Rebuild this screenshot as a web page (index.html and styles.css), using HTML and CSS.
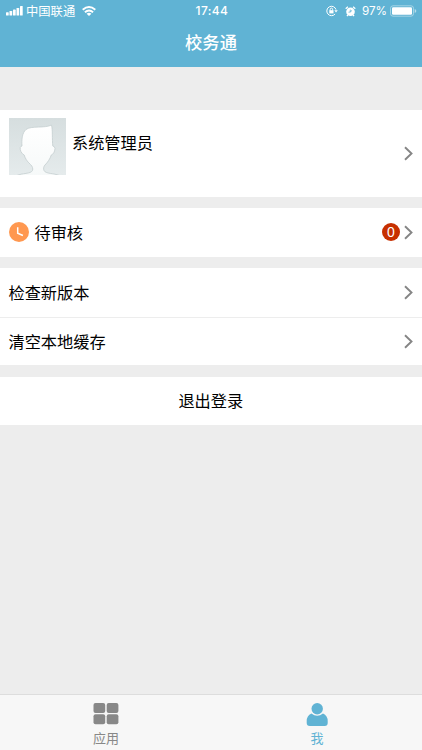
FILE: index.html
```html
<!DOCTYPE html>
<html lang="zh-CN">
<head>
<meta charset="utf-8">
<title>校务通</title>
<link rel="stylesheet" href="styles.css">
</head>
<body>
<header class="header">
  <div class="status">
    <div class="status-left">
      <svg class="signal" width="17" height="10" viewBox="0 0 17 10" fill="#fff"><rect x="0" y="6.2" width="2.7" height="3.4" rx=".6"/><rect x="3.5" y="5" width="2.7" height="4.6" rx=".6"/><rect x="7" y="3.6" width="2.7" height="6" rx=".6"/><rect x="10.5" y="2" width="2.7" height="7.6" rx=".6"/><rect x="14" y="0" width="2.7" height="9.6" rx=".6"/></svg>
      <span class="carrier">中国联通</span>
      <svg class="wifi" width="14" height="10" viewBox="0 0 14 10" fill="none" stroke="#fff" stroke-width="1.9"><path d="M.7 3.7Q7-1.7 13.3 3.7M2.9 6.2Q7 2.6 11.1 6.2"/><path d="M4.6 7.7Q7 5.7 9.4 7.7L7 10Z" fill="#fff" stroke="none"/></svg>
    </div>
    <span class="time">17:44</span>
    <div class="status-right">
      <svg width="12" height="12" viewBox="0 0 12 12" fill="none" stroke="#fff" stroke-width="1"><path d="M9.1 9A4.7 4.7 0 1 1 10 4.6"/><path d="M8.300 5.200h3.500L10 7.600Z" fill="#fff" stroke="none"/><rect x="3.300" y="5.200" width="4.200" height="3.200" fill="#fff" stroke="none"/><path d="M4.200 5.500V4.400q0-1.300 1.200-1.300t1.200 1.300v1.100"/></svg>
      <svg class="alarm" width="11" height="11" viewBox="0 0 11 11" fill="none" stroke="#fff"><circle cx="5.500" cy="5.700" r="4.300" fill="#fff" stroke="none"/><path d="M.7 2.700L2.900.8M10.300 2.700L8.100.8M2.900 8.900L2 10.200M8.100 8.900l.9 1.300" stroke-width="1.300"/><path d="M5.300 3.600V6l-1.800.2M5.300 6l1.800-1.700" stroke="#60b3d4" stroke-width=".8"/></svg>
      <span class="percent">97%</span>
      <svg width="27" height="12" viewBox="0 0 27 12"><rect x=".5" y=".8" width="23" height="10.400" rx="2.500" fill="none" stroke="#b5dcea" stroke-width=".8"/><rect x="2" y="2.200" width="20" height="7.600" rx="1.200" fill="#fff"/><path d="M24.700 4q1.600.4 1.600 2t-1.600 2Z" fill="#b5dcea"/></svg>
    </div>
  </div>
  <h1 class="title">校务通</h1>
</header>
<main class="content">
  <section class="card profile">
    <svg class="avatar" width="57" height="57" viewBox="0 0 57 57">
      <defs>
        <linearGradient id="bg" x2="0" y2="1"><stop stop-color="#d6dedf"/><stop offset="1" stop-color="#e5ebec"/></linearGradient>
        <linearGradient id="face" x2="0" y2="1"><stop stop-color="#fff"/><stop offset="1" stop-color="#f6f9f9"/></linearGradient>
      </defs>
      <path fill="url(#bg)" d="M0 0h57v57H0z"/>
      <path d="M8 57.500C13 55 22 56 23.500 52.500C24.200 50.500 23.500 48.500 21.500 46.500C18 43.500 16 40 15.200 37C12.500 36 10.800 32 11.200 29.500Q11.500 28.300 13 28C12.500 22 13 15 17 11.500C22 7.500 36 10.500 42.500 7C43.800 12 43 21 43.800 28Q46 28.500 46 30.500C45.800 34 44 36.500 42.300 37C41 41 38.500 44.500 36 47C34.500 48.500 34.300 51 35 52.500C36.500 56 45 55 50 57.500Z" fill="url(#face)" stroke="#c4cecf" stroke-width=".8"/>
    </svg>
    <span class="name">系统管理员</span>
    <svg class="chevron" width="9" height="15" viewBox="0 0 9 15"><path d="M1 1.300L7.500 7.500L1 13.700"/></svg>
  </section>
  <section class="card">
    <div class="row">
      <svg class="clock" width="20" height="20" viewBox="0 0 20 20"><circle cx="10" cy="10" r="10" fill="#ff9850"/><path d="M8.700 5.200V11.200l5.200 2.300" fill="none" stroke="#fff" stroke-width="1.500"/></svg>
      <span class="label">待审核</span>
      <span class="badge">0</span>
      <svg class="chevron" width="9" height="15" viewBox="0 0 9 15"><path d="M1 1.300L7.500 7.500L1 13.700"/></svg>
    </div>
  </section>
  <section class="card">
    <div class="row">
      <span class="label">检查新版本</span>
      <svg class="chevron" width="9" height="15" viewBox="0 0 9 15"><path d="M1 1.300L7.500 7.500L1 13.700"/></svg>
    </div>
    <div class="row divided">
      <span class="label">清空本地缓存</span>
      <svg class="chevron" width="9" height="15" viewBox="0 0 9 15"><path d="M1 1.300L7.500 7.500L1 13.700"/></svg>
    </div>
  </section>
  <section class="card">
    <div class="row logout"><span class="label">退出登录</span></div>
  </section>
</main>
<nav class="tabs">
  <div class="tab">
    <svg width="26" height="24" viewBox="0 0 26 24" fill="#888"><rect x=".5" y="0" width="11.700" height="10" rx="2"/><rect x="13.700" y="0" width="11.700" height="10" rx="2"/><rect x=".5" y="11.300" width="11.700" height="10" rx="2"/><rect x="13.700" y="11.300" width="11.700" height="10" rx="2"/></svg>
    <span>应用</span>
  </div>
  <div class="tab active">
    <svg width="26" height="24" viewBox="0 0 26 24" fill="#60b3d4"><circle cx="13.200" cy="5.800" r="5.700"/><path d="M7.400 10.400Q13.200 15.200 19 10.400Q23.700 12.400 23.700 18v2q0 3-3 3H5.700q-3 0-3-3V18q0-5.600 4.700-7.600Z"/></svg>
    <span>我</span>
  </div>
</nav>
</body>
</html>
```
FILE: styles.css
```css
* { box-sizing: border-box; }
body {
  margin: 0;
  height: 750px;
  display: flex;
  flex-direction: column;
  overflow: hidden;
  background: #ededed;
  color: #000;
  font-family: "Liberation Sans", "Noto Sans CJK SC", sans-serif;
  font-size: 16.2px;
}
svg { display: block; flex: none; }
.header { height: 66.5px; background: #60b3d4; color: #fff; }
.status {
  height: 22px;
  padding: 0 5px 0 6px;
  display: grid;
  grid-template-columns: 1fr auto 1fr;
  align-items: center;
  font-family: Inter, "Noto Sans CJK SC", sans-serif;
  font-size: 11.5px;
  line-height: 22px;
}
.status-left, .status-right { display: flex; align-items: center; }
.status-right { justify-content: flex-end; }
.carrier { margin-left: 3px; padding-top: 1px; font-size: 12.3px; line-height: 21px; }
.wifi { margin-left: 7px; }
.time { padding-left: 1px; font-weight: 500; font-size: 12px; letter-spacing: .4px; }
.alarm { margin-left: 7px; }
.percent { margin: 0 3px 0 6px; font-size: 11.7px; }
.title {
  margin: 0;
  height: 44px;
  line-height: 42px;
  text-align: center;
  font-size: 17.3px;
  font-weight: 500;
}
.content {
  flex: 1;
  padding-top: 43.5px;
  display: flex;
  flex-direction: column;
  gap: 11.5px;
}
.card { background: #fff; }
.profile {
  height: 86.5px;
  padding: 8px 9px 8px 8.500px;
  display: flex;
  align-items: flex-start;
}
.name { margin-left: 6.500px; line-height: 24px; padding-top: 13px; }
.profile .chevron { align-self: center; margin-top: 1px; }
.chevron {
  margin-left: auto;
  fill: none;
  stroke: #858585;
  stroke-width: 1.9;
}
.row {
  height: 48.5px;
  padding: 0 9px 0 8.500px;
  display: flex;
  align-items: center;
  line-height: 24px;
}
.label { padding-top: 1px; }
.divided { border-top: 1px solid #ededed; }
.clock { margin-right: 6px; }
.badge {
  margin-left: auto;
  width: 18px;
  height: 18px;
  border-radius: 50%;
  background: #c73000;
  color: #fff;
  font-size: 14px;
  line-height: 18px;
  text-align: center;
}
.badge + .chevron { margin-left: 4px; }
.logout { justify-content: center; }
.tabs {
  height: 56.5px;
  display: flex;
  border-top: 1px solid #ddd;
  background: #f7f7f7;
  color: #888;
  font-size: 13px;
}
.tab {
  flex: 1;
  padding: 8.500px 0 0 1px;
  display: flex;
  flex-direction: column;
  align-items: center;
  line-height: 23px;
}
.active { color: #60b3d4; }
```
